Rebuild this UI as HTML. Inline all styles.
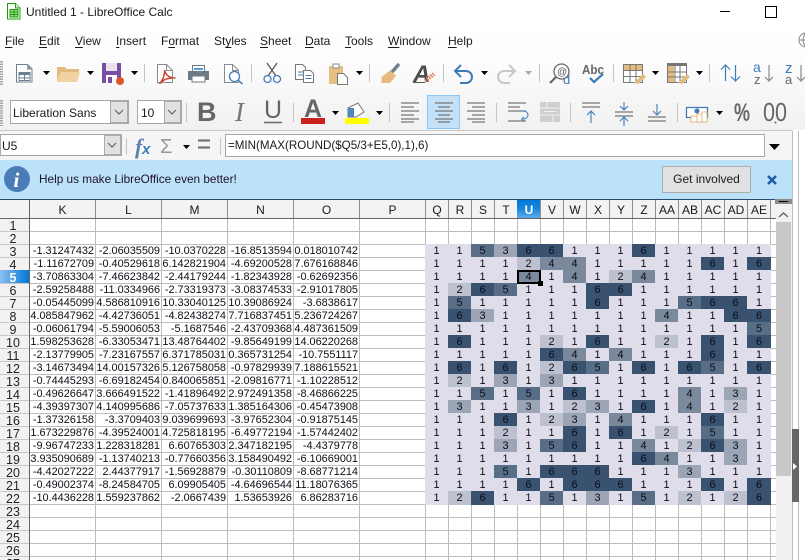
<!DOCTYPE html>
<html><head><meta charset="utf-8"><title>Untitled 1 - LibreOffice Calc</title>
<style>
html,body{margin:0;padding:0;background:#fff}
#p{position:relative;width:805px;height:560px;overflow:hidden;background:#fff;font-family:"Liberation Sans",sans-serif;color:#111}
#p>*{position:absolute}
.t{font-size:12px;white-space:nowrap;line-height:14px;color:#1a1a1a}
.t u{text-decoration:underline;text-underline-offset:2px}
.sep{width:1px;background:#c4c4c4}
.drop{background:#e1e1e1;border:1px solid #ababab;box-sizing:border-box}
.box{background:#fff;border:1px solid #a8a8a8;box-sizing:border-box}
.d{left:29px;top:245px;font-size:10.9px;color:#0e0e16}
.d div{display:flex;height:13px;line-height:13px}
.d b{display:block;width:65px;padding-right:1px;text-align:right;font-weight:normal}
.h{left:425px;top:244px;width:346px;background:#dfdde9;font-size:10.9px;color:#0c0c16}
.h div{display:flex;height:13px}
.h div:last-child{height:14px}
.h i{display:block;width:23px;text-align:center;font-style:normal;line-height:15px}
.h i:last-child{width:24px}
.c2{background:#bdc1cf}.c3{background:#9ba5b5}.c4{background:#7a899c}.c5{background:#586e87}.c6{background:#385270}
.rh{left:0;top:218px;width:26px;text-align:center;font-size:12.5px;color:#222;height:342px;overflow:hidden}
.rh div{height:13px;line-height:17px;overflow:hidden}
.ch{top:200px;height:18px;line-height:20px;text-align:center;font-size:12px;color:#1a1a1a}
</style></head><body>
<div id="p">
<div style="left:0;top:28px;width:805px;height:102px;background:linear-gradient(#fff,#fdfdfd 30%,#f1f1f1)"></div>
<div style="left:0;top:130px;width:792px;height:1px;background:#c8c8c8"></div>
<div style="left:0;top:131px;width:792px;height:29px;background:#f5f5f5"></div>
<div style="left:792px;top:130px;width:13px;height:430px;background:#fff"></div>

<!-- infobar -->
<div style="left:0;top:160px;width:792px;height:39px;background:#bbe2f8"></div>
<div style="left:0;top:199px;width:776px;height:1px;background:#26496e"></div>

<!-- grid -->
<div style="left:30px;top:219px;width:746px;height:341px;background:repeating-linear-gradient(to bottom,transparent 0 12px,#bdbdbd 12px 13px)"></div>
<div style="left:30px;top:219px;width:396px;height:341px;background:repeating-linear-gradient(to right,transparent 0 65px,#bdbdbd 65px 66px)"></div>
<div style="left:426px;top:219px;width:345px;height:341px;background:repeating-linear-gradient(to right,transparent 0 22px,#bdbdbd 22px 23px)"></div>

<!-- headers -->
<div style="left:0;top:200px;width:776px;height:18px;background:#f3f3f3"></div>
<div style="left:0;top:218px;width:29px;height:342px;background:#f2f2f2;"></div>
<div style="left:0;top:219px;width:29px;height:341px;background:repeating-linear-gradient(to bottom,transparent 0 12px,#c8c8c8 12px 13px)"></div>
<div style="left:0;top:218px;width:776px;height:1px;background:#666"></div>
<div style="left:29px;top:200px;width:1px;height:360px;background:#666"></div>
<div style="left:30px;top:200px;width:396px;height:18px;background:repeating-linear-gradient(to right,transparent 0 65px,#8f8f8f 65px 66px)"></div>
<div style="left:426px;top:200px;width:345px;height:18px;background:repeating-linear-gradient(to right,transparent 0 22px,#8f8f8f 22px 23px)"></div>
<div style="left:517px;top:200px;width:23px;height:18px;background:linear-gradient(#0078d7,#1b86dc 50%,#5fabe9)"></div>
<div style="left:0;top:270px;width:29px;height:13px;background:linear-gradient(to right,#8cc0ee,#0078d7)"></div>

<div class="ch" style="left:30px;width:65px">K</div><div class="ch" style="left:96px;width:65px">L</div><div class="ch" style="left:162px;width:65px">M</div><div class="ch" style="left:228px;width:65px">N</div><div class="ch" style="left:294px;width:65px">O</div><div class="ch" style="left:360px;width:65px">P</div>
<div class="ch" style="left:426px;width:22px">Q</div><div class="ch" style="left:449px;width:22px">R</div><div class="ch" style="left:472px;width:22px">S</div><div class="ch" style="left:495px;width:22px">T</div><div class="ch" style="left:518px;width:22px;color:#fff;font-weight:bold">U</div><div class="ch" style="left:541px;width:22px">V</div><div class="ch" style="left:564px;width:22px">W</div><div class="ch" style="left:587px;width:22px">X</div><div class="ch" style="left:610px;width:22px">Y</div><div class="ch" style="left:633px;width:22px">Z</div><div class="ch" style="left:656px;width:22px">AA</div><div class="ch" style="left:679px;width:22px">AB</div><div class="ch" style="left:702px;width:22px">AC</div><div class="ch" style="left:725px;width:22px">AD</div><div class="ch" style="left:748px;width:22px">AE</div>

<div class="rh"><div>1</div><div>2</div><div>3</div><div>4</div><div style="color:#fff;font-weight:bold">5</div><div>6</div><div>7</div><div>8</div><div>9</div><div>10</div><div>11</div><div>12</div><div>13</div><div>14</div><div>15</div><div>16</div><div>17</div><div>18</div><div>19</div><div>20</div><div>21</div><div>22</div><div>23</div><div>24</div><div>25</div><div>26</div><div>27</div></div>

<!-- data -->
<div class="d">
<div><b>-1.31247432</b><b>-2.06035509</b><b>-10.0370228</b><b>-16.8513594</b><b>0.018010742</b></div>
<div><b>-1.11672709</b><b>-0.40529618</b><b>6.142821904</b><b>-4.69200528</b><b>7.676168846</b></div>
<div><b>-3.70863304</b><b>-7.46623842</b><b>-2.44179244</b><b>-1.82343928</b><b>-0.62692356</b></div>
<div><b>-2.59258488</b><b>-11.0334966</b><b>-2.73319373</b><b>-3.08374533</b><b>-2.91017805</b></div>
<div><b>-0.05445099</b><b>4.586810916</b><b>10.33040125</b><b>10.39086924</b><b>-3.6838617</b></div>
<div><b>4.085847962</b><b>-4.42736051</b><b>-4.82438274</b><b>7.716837451</b><b>5.236724267</b></div>
<div><b>-0.06061794</b><b>-5.59006053</b><b>-5.1687546</b><b>-2.43709368</b><b>4.487361509</b></div>
<div><b>1.598253628</b><b>-6.33053471</b><b>13.48764402</b><b>-9.85649199</b><b>14.06220268</b></div>
<div><b>-2.13779905</b><b>-7.23167557</b><b>6.371785031</b><b>0.365731254</b><b>-10.7551117</b></div>
<div><b>-3.14673494</b><b>14.00157326</b><b>5.126758058</b><b>-0.97829939</b><b>7.188615521</b></div>
<div><b>-0.74445293</b><b>-6.69182454</b><b>0.840065851</b><b>-2.09816771</b><b>-1.10228512</b></div>
<div><b>-0.49626647</b><b>3.666491522</b><b>-1.41896492</b><b>2.972491358</b><b>-8.46866225</b></div>
<div><b>-4.39397307</b><b>4.140995686</b><b>-7.05737633</b><b>1.385164306</b><b>-0.45473908</b></div>
<div><b>-1.37326158</b><b>-3.3709403</b><b>9.039699693</b><b>-3.97652304</b><b>-0.91875145</b></div>
<div><b>1.673229876</b><b>-4.39524001</b><b>4.725818195</b><b>-6.49772194</b><b>-1.57442402</b></div>
<div><b>-9.96747233</b><b>1.228318281</b><b>6.60765303</b><b>2.347182195</b><b>-4.4379778</b></div>
<div><b>3.935090689</b><b>-1.13740213</b><b>-0.77660356</b><b>3.158490492</b><b>-6.10669001</b></div>
<div><b>-4.42027222</b><b>2.44377917</b><b>-1.56928879</b><b>-0.30110809</b><b>-8.68771214</b></div>
<div><b>-0.49002374</b><b>-8.24584705</b><b>6.09905405</b><b>-4.64696544</b><b>11.18076365</b></div>
<div><b>-10.4436228</b><b>1.559237862</b><b>-2.0667439</b><b>1.53653926</b><b>6.86283716</b></div>
</div>

<div class="h">
<div><i>1</i><i>1</i><i class="c5">5</i><i class="c3">3</i><i class="c6">6</i><i class="c6">6</i><i>1</i><i>1</i><i>1</i><i class="c6">6</i><i>1</i><i>1</i><i>1</i><i>1</i><i>1</i></div>
<div><i>1</i><i>1</i><i>1</i><i>1</i><i class="c2">2</i><i class="c4">4</i><i class="c4">4</i><i>1</i><i>1</i><i>1</i><i>1</i><i>1</i><i class="c6">6</i><i>1</i><i class="c6">6</i></div>
<div><i>1</i><i>1</i><i>1</i><i>1</i><i class="c4">4</i><i>1</i><i class="c4">4</i><i>1</i><i class="c2">2</i><i class="c4">4</i><i>1</i><i>1</i><i>1</i><i>1</i><i>1</i></div>
<div><i>1</i><i class="c2">2</i><i class="c6">6</i><i class="c5">5</i><i>1</i><i>1</i><i>1</i><i class="c6">6</i><i class="c6">6</i><i>1</i><i>1</i><i>1</i><i>1</i><i>1</i><i>1</i></div>
<div><i>1</i><i class="c5">5</i><i>1</i><i>1</i><i>1</i><i>1</i><i>1</i><i class="c6">6</i><i>1</i><i>1</i><i>1</i><i class="c5">5</i><i class="c6">6</i><i class="c6">6</i><i>1</i></div>
<div><i>1</i><i class="c6">6</i><i class="c3">3</i><i>1</i><i>1</i><i>1</i><i>1</i><i>1</i><i>1</i><i>1</i><i class="c4">4</i><i>1</i><i>1</i><i class="c6">6</i><i class="c6">6</i></div>
<div><i>1</i><i>1</i><i>1</i><i>1</i><i>1</i><i>1</i><i>1</i><i>1</i><i>1</i><i>1</i><i>1</i><i>1</i><i>1</i><i>1</i><i class="c5">5</i></div>
<div><i>1</i><i class="c6">6</i><i>1</i><i>1</i><i>1</i><i class="c2">2</i><i>1</i><i class="c6">6</i><i>1</i><i>1</i><i class="c2">2</i><i>1</i><i class="c6">6</i><i>1</i><i class="c6">6</i></div>
<div><i>1</i><i>1</i><i>1</i><i>1</i><i>1</i><i class="c6">6</i><i class="c4">4</i><i>1</i><i class="c4">4</i><i>1</i><i>1</i><i>1</i><i class="c6">6</i><i>1</i><i>1</i></div>
<div><i>1</i><i class="c6">6</i><i>1</i><i class="c6">6</i><i>1</i><i class="c2">2</i><i class="c6">6</i><i class="c5">5</i><i>1</i><i class="c6">6</i><i>1</i><i class="c6">6</i><i class="c5">5</i><i>1</i><i class="c6">6</i></div>
<div><i>1</i><i class="c2">2</i><i>1</i><i class="c3">3</i><i>1</i><i class="c3">3</i><i>1</i><i>1</i><i>1</i><i>1</i><i>1</i><i>1</i><i>1</i><i>1</i><i>1</i></div>
<div><i>1</i><i>1</i><i class="c5">5</i><i>1</i><i class="c5">5</i><i>1</i><i class="c6">6</i><i>1</i><i>1</i><i>1</i><i>1</i><i class="c4">4</i><i>1</i><i class="c3">3</i><i>1</i></div>
<div><i>1</i><i class="c3">3</i><i>1</i><i>1</i><i class="c3">3</i><i>1</i><i class="c2">2</i><i class="c3">3</i><i>1</i><i class="c6">6</i><i>1</i><i class="c4">4</i><i>1</i><i class="c2">2</i><i>1</i></div>
<div><i>1</i><i>1</i><i>1</i><i class="c6">6</i><i>1</i><i class="c2">2</i><i class="c3">3</i><i>1</i><i class="c4">4</i><i>1</i><i>1</i><i>1</i><i class="c6">6</i><i>1</i><i>1</i></div>
<div><i>1</i><i>1</i><i>1</i><i class="c2">2</i><i>1</i><i>1</i><i class="c6">6</i><i>1</i><i class="c6">6</i><i>1</i><i class="c2">2</i><i>1</i><i class="c5">5</i><i>1</i><i>1</i></div>
<div><i>1</i><i>1</i><i>1</i><i class="c3">3</i><i>1</i><i class="c5">5</i><i class="c6">6</i><i>1</i><i>1</i><i class="c4">4</i><i>1</i><i class="c2">2</i><i class="c6">6</i><i class="c3">3</i><i>1</i></div>
<div><i>1</i><i>1</i><i>1</i><i>1</i><i>1</i><i>1</i><i>1</i><i>1</i><i>1</i><i class="c6">6</i><i class="c4">4</i><i>1</i><i>1</i><i class="c3">3</i><i>1</i></div>
<div><i>1</i><i>1</i><i>1</i><i class="c5">5</i><i>1</i><i class="c6">6</i><i class="c6">6</i><i class="c6">6</i><i>1</i><i>1</i><i>1</i><i class="c3">3</i><i>1</i><i>1</i><i>1</i></div>
<div><i>1</i><i>1</i><i>1</i><i>1</i><i class="c6">6</i><i>1</i><i class="c6">6</i><i class="c6">6</i><i class="c6">6</i><i>1</i><i>1</i><i>1</i><i class="c6">6</i><i>1</i><i class="c6">6</i></div>
<div><i>1</i><i class="c2">2</i><i class="c6">6</i><i>1</i><i>1</i><i class="c5">5</i><i>1</i><i class="c3">3</i><i>1</i><i class="c5">5</i><i>1</i><i class="c2">2</i><i>1</i><i class="c2">2</i><i class="c6">6</i></div>
</div>

<!-- cell cursor -->
<div style="left:517px;top:270px;width:24px;height:14px;border:2px solid #000;box-sizing:border-box"></div>
<div style="left:538px;top:281px;width:5px;height:5px;background:#000"></div>

<!-- scrollbars & sidebar -->
<div style="left:776px;top:200px;width:16px;height:360px;background:#f1f1f1"></div>
<div style="left:775px;top:199px;width:17px;height:5px;background:#8a8a8a"></div>
<div style="left:779px;top:201px;width:9px;height:1px;background:#000"></div>
<div style="left:776px;top:222px;width:15px;height:254px;background:#c8c8c8"></div>
<div style="left:792px;top:131px;width:1px;height:429px;background:#bdbdbd"></div>
<div style="left:798px;top:131px;width:1px;height:429px;background:#bdbdbd"></div>
<div style="left:792px;top:429px;width:7px;height:73px;background:#666"></div>

<!-- title -->
<div class="t" style="left:26px;top:5px;font-size:12px">Untitled 1 - LibreOffice Calc</div>
<div style="left:720px;top:11px;width:10px;height:1px;background:#000"></div>
<div style="left:765px;top:6px;width:10px;height:10px;border:1px solid #000"></div>

<!-- menu -->
<div class="t" style="left:5px;top:34px"><u>F</u>ile</div>
<div class="t" style="left:39px;top:34px"><u>E</u>dit</div>
<div class="t" style="left:75px;top:34px"><u>V</u>iew</div>
<div class="t" style="left:116px;top:34px"><u>I</u>nsert</div>
<div class="t" style="left:161px;top:34px">F<u>o</u>rmat</div>
<div class="t" style="left:214px;top:34px">St<u>y</u>les</div>
<div class="t" style="left:260px;top:34px"><u>S</u>heet</div>
<div class="t" style="left:305px;top:34px"><u>D</u>ata</div>
<div class="t" style="left:345px;top:34px"><u>T</u>ools</div>
<div class="t" style="left:388px;top:34px"><u>W</u>indow</div>
<div class="t" style="left:448px;top:34px"><u>H</u>elp</div>

<!-- toolbar separators -->
<div class="sep" style="left:144px;top:64px;height:18px"></div><div class="sep" style="left:251px;top:64px;height:18px"></div><div class="sep" style="left:369px;top:64px;height:18px"></div><div class="sep" style="left:443px;top:64px;height:18px"></div><div class="sep" style="left:539px;top:64px;height:18px"></div><div class="sep" style="left:613px;top:64px;height:18px"></div><div class="sep" style="left:709px;top:64px;height:18px"></div>
<div class="sep" style="left:186px;top:103px;height:19px"></div><div class="sep" style="left:293px;top:103px;height:19px"></div><div class="sep" style="left:389px;top:103px;height:19px"></div><div class="sep" style="left:496px;top:103px;height:19px"></div><div class="sep" style="left:570px;top:103px;height:19px"></div><div class="sep" style="left:677px;top:103px;height:19px"></div>
<div class="sep" style="left:126px;top:138px;height:17px"></div><div class="sep" style="left:220px;top:138px;height:17px"></div>

<!-- font boxes -->
<div class="box" style="left:10px;top:100px;width:119px;height:24px"></div>
<div class="drop" style="left:110px;top:101px;width:18px;height:22px"></div>
<div class="t" style="left:13px;top:106px">Liberation Sans</div>
<div class="box" style="left:137px;top:100px;width:45px;height:24px"></div>
<div class="drop" style="left:164px;top:101px;width:17px;height:22px"></div>
<div class="t" style="left:141px;top:106px">10</div>
<div style="left:427px;top:95px;width:33px;height:34px;background:#c5e1f7;border:1px solid #8dc6f0;box-sizing:border-box"></div>

<!-- formula bar -->
<div class="box" style="left:0;top:134px;width:122px;height:22px"></div>
<div class="drop" style="left:104px;top:135px;width:17px;height:20px"></div>
<div class="t" style="left:2px;top:139px">U5</div>
<div class="box" style="left:225px;top:134px;width:540px;height:23px"></div>
<div class="t" style="left:228px;top:139px;font-size:11.6px">=MIN(MAX(ROUND($Q5/3+E5,0),1),6)</div>

<!-- infobar contents -->
<div class="t" style="left:39px;top:172px;color:#20102a;font-size:11.8px">Help us make LibreOffice even better!</div>
<div style="left:662px;top:166px;width:89px;height:27px;background:#e1e1e1;border:1px solid #adadad;box-sizing:border-box;text-align:center;line-height:25px;font-size:12px;color:#1a1a1a">Get involved</div>

<!-- icons -->
<svg width="805" height="560" viewBox="0 0 805 560" style="left:0;top:0" font-family="Liberation Sans, sans-serif">
<!-- app icon -->
<path d="M7.500 3.500h8l4.500 4.500v11h-12.500z" fill="#fff" stroke="#18a303"/><path d="M15.500 3.500v4.500h4.500" fill="#dff3da" stroke="#18a303"/><path d="M10 9.500h8v7.500h-8z" fill="#9ed694" stroke="#18a303"/><path d="M10 12h8M10 14.500h8M14 9.500v7.500" stroke="#18a303" fill="none"/>
<!-- globe -->
<circle cx="806" cy="40" r="7" fill="none" stroke="#888"/><path d="M799 40h14M806 33c-4 4-4 10 0 14M806 33c4 4 4 10 0 14" fill="none" stroke="#888"/>
<!-- grippers -->
<path d="M1.500 61v25M1.500 100v26" stroke="#a8a8a8" stroke-width="3" stroke-dasharray="1.500 1"/>

<!-- new -->
<path d="M16.500 64.500h11l4.500 4.500v13h-15.500z" fill="#fff" stroke="#6f7f92"/><path d="M27 64.500l5 5h-5z" fill="#8d99a8"/><path d="M19 72.500h11v8h-11z" fill="#fff" stroke="#6f7f92"/><path d="M19 72.500h11v2.500h-11z" fill="#6f7f92"/><path d="M19 78h11M24.500 75v5" stroke="#6f7f92" fill="none"/>
<path d="M43 71h7l-3.500 4zM87 71h7l-3.500 4zM131 71h7l-3.500 4zM356 71h7l-3.500 4zM481 71h7l-3.500 4zM652 71h7l-3.500 4zM696 71h7l-3.500 4z" fill="#000"/>
<path d="M525 71h7l-3.500 4z" fill="#a9a9a9"/>
<!-- open -->
<path d="M57 82V67h8l2 2h12v5H60l-3 8z" fill="#e3bb7e"/><path d="M57 82l4-10h19l-3 10z" fill="#f1d3a2"/>
<!-- save -->
<path d="M102 63h19v20h-19z" fill="#7a4fa3"/><path d="M106 63h11v8h-11z" fill="#e9e2ef"/><path d="M106 75h11v8h-11z" fill="#fff"/><path d="M108 77h4v6h-4z" fill="#7a4fa3"/><circle cx="120" cy="81" r="4" fill="#d8572b"/>
<!-- pdf -->
<path d="M157.500 64.500h9l6 6v12h-15z" fill="#fff" stroke="#8a8a8a"/><path d="M166.500 64.500v6h6" fill="none" stroke="#8a8a8a"/><path d="M160 83c3-3 5-9 4.500-13 1 4 4 8 11 8-5-.5-11 .5-15 5z" fill="none" stroke="#c8412c" stroke-width="1.500"/>
<!-- print -->
<path d="M192.500 65.500h12v6h-12z" fill="#fff" stroke="#6e7a86"/><path d="M194 68h9v2h-9z" fill="#4f9ad4"/><path d="M188 71h21v9h-21z" fill="#6e7a86"/><path d="M192 76h13v6h-13z" fill="#fff" stroke="#6e7a86"/>
<!-- preview -->
<path d="M224.500 64.500h8l6 6v12h-14z" fill="#fff" stroke="#8a8a8a"/><path d="M232.500 64.500v6h6" fill="none" stroke="#8a8a8a"/><circle cx="234.500" cy="76.500" r="5" fill="#fff" stroke="#3f7ab8" stroke-width="1.300"/><path d="M238 80l4.500 4" stroke="#3f7ab8" stroke-width="1.500"/>
<!-- cut -->
<path d="M268 76L277 63M276 76L267 63" stroke="#666" stroke-width="1.500" fill="none"/><circle cx="267.500" cy="79" r="3.500" fill="none" stroke="#3f7ab8" stroke-width="1.300"/><circle cx="277" cy="79" r="3.500" fill="none" stroke="#3f7ab8" stroke-width="1.300"/>
<!-- copy -->
<path d="M295.500 64.500h7l3 3v12h-10z" fill="#fff" stroke="#777"/><path d="M303.500 70.500h7l3 3v9h-10z" fill="#fff" stroke="#777"/><path d="M298 72h5M298 75h5M305.500 75.500h6M305.500 78.500h6" stroke="#3f7ab8" fill="none"/>
<!-- paste -->
<path d="M329 66h14v18h-14z" fill="#e6c083"/><path d="M333 64h6v4h-6z" fill="#fff" stroke="#888"/><path d="M337.500 73.500h6l4 4v7h-10z" fill="#fff" stroke="#777"/>
<!-- clone brush -->
<path d="M381.500 77l9-7 5.500 6-6 7h-8.500z" fill="#e3bb7e"/><path d="M392 72l7-8" stroke="#6f7f92" stroke-width="3.500"/>
<!-- char format -->
<text x="413" y="82" font-size="24" font-weight="bold" font-style="italic" fill="#4d4d4d">A</text><path d="M425 81l9-7" stroke="#e08a66" stroke-width="4" stroke-dasharray="1.500 1"/><path d="M413 82.500h12" stroke="#555"/>
<!-- undo -->
<path d="M455 71h11a6 6 0 0 1 0 12h-6M461 65l-6 6 6 6" fill="none" stroke="#3f7ab8" stroke-width="2"/>
<!-- redo -->
<path d="M515 71h-11a6 6 0 0 0 0 12h6M509 65l6 6-6 6" fill="none" stroke="#c8c8c8" stroke-width="2"/>
<!-- find -->
<circle cx="561.500" cy="71.500" r="7.500" fill="#fff" stroke="#666" stroke-width="1.300"/><path d="M556 77l-6 6" stroke="#666" stroke-width="2.200"/><text x="557" y="75" font-size="10" fill="#555">@</text><text x="563" y="84" font-size="13" fill="#3f7ab8">d</text>
<!-- spell -->
<text x="582" y="74" font-size="13" font-weight="bold" fill="#666" textLength="22" lengthAdjust="spacingAndGlyphs">Abc</text><path d="M590 78l4 4 9-8" fill="none" stroke="#3f7ab8" stroke-width="2.200"/>
<!-- define table -->
<path d="M623.500 64.500h19v18h-19z" fill="#fff" stroke="#777"/><path d="M624 65h18v5h-18z" fill="#e3bb7e"/><path d="M624 70.500h18M624 76.500h18M630 65v18M636 65v18" stroke="#777" fill="none"/><path d="M634 83l9-9 3 3-8 7z" fill="#e3bb7e"/>
<path d="M667.500 63.500h19v19h-19z" fill="#fff" stroke="#777"/><path d="M667 63h20v3h-20z" fill="#777"/><path d="M668 66h6v16h-6z" fill="#e3bb7e"/><path d="M668 72h18M668 77h18M675 66v16M680 66v16" stroke="#777" fill="none"/><path d="M678 83l9-9 3 3-8 7z" fill="#e3bb7e"/>
<!-- sorts -->
<path d="M725.500 81V65M721 69.500l4.500-4.500 4.500 4.500M735.500 65v16M731 76.500l4.500 4.500 4.500-4.500" fill="none" stroke="#3f7ab8" stroke-width="1.200"/>
<text x="753" y="72" font-size="14" fill="#3f7ab8">a</text><text x="754" y="84" font-size="13" fill="#666">z</text><path d="M769 65v16M765 77l4 4 4-4" fill="none" stroke="#888" stroke-width="1.200"/>
<text x="785" y="73" font-size="15" fill="#3f7ab8">z</text><text x="785" y="84" font-size="13" fill="#666">a</text><path d="M801 65v16M797 77l4 4 4-4" fill="none" stroke="#888" stroke-width="1.200"/>

<!-- combo chevrons -->
<path d="M115 110l4 4 4-4M168 110l4 4 4-4M108 143l4 4 4-4" fill="none" stroke="#666" stroke-width="1.200"/>

<!-- B I U -->
<text x="197" y="121" font-size="27" font-weight="bold" fill="#666">B</text>
<text x="235" y="121" font-size="27" font-style="italic" font-family="Liberation Serif, serif" fill="#777">I</text>
<text x="264" y="118" font-size="25" fill="#666">U</text><path d="M264 122.500h18" stroke="#666" stroke-width="1.500"/>
<!-- font color -->
<text x="304" y="117" font-size="25" font-weight="bold" fill="#666" textLength="18" lengthAdjust="spacingAndGlyphs">A</text><path d="M301 118h24v6h-24z" fill="#c9211e"/><path d="M332 111h7l-3.500 4zM376 111h7l-3.500 4zM716 111h7l-3.500 4zM183 145h7l-3.500 4z" fill="#000"/>
<!-- highlight -->
<path d="M348 108l10-5 6 9-8 5h-8z" fill="#fff" stroke="#777"/><path d="M348 108h6v9h-6z" fill="#4f86c0"/><path d="M345 118h24v6h-24z" fill="#ffff00"/>
<!-- align left/center/right -->
<g stroke="#777" stroke-width="1.200" fill="none">
<path d="M401 103h18M401 107h13M401 111h18M401 115h13M401 119h18M401 122h13"/>
<path d="M435 103h18M438 107h12M435 111h18M438 115h12M435 119h18M438 122h12"/>
<path d="M467 103h18M472 107h13M467 111h18M472 115h13M467 119h18M472 122h13"/>
<path d="M508 103h18M508 107h12M508 111h18M508 121h18"/>
<path d="M582 103h18M582 107h18M615 112h18M615 116h18M648 117h18M648 121h18"/>
</g>
<path d="M520 111h4a3 3 0 0 1 0 8h-1M524 117l-2.500 2 2.500 2" fill="none" stroke="#3f7ab8"/>
<!-- merge -->
<path d="M540 102h20v20h-20z" fill="#cfcfcf"/><path d="M540 108h20M540 115h20M547 102v6M553 115v7M544 111.500h12" stroke="#f2f2f2" fill="none"/>
<!-- v-align arrows -->
<path d="M591 123v-12M587 115l4-4 4 4M624 102v8M620 106l4 4 4-4M624 126v-9M620 121l4-4 4 4M657 104v11M653 111l4 4 4-4" fill="none" stroke="#3f7ab8" stroke-width="1.100"/>
<!-- currency -->
<path d="M686.500 107.500h21v10h-21z" fill="#fff" stroke="#3f7ab8" stroke-width="1.300"/><circle cx="697" cy="111" r="2.500" fill="#3f7ab8"/><path d="M691 116h6v6h-6zM697 114h5v8h-5zM702 112h5v10h-5z" fill="#fff" stroke="#e3bb7e"/>
<!-- percent, number -->
<text x="734" y="121" font-size="25" font-weight="bold" fill="#666" textLength="16" lengthAdjust="spacingAndGlyphs">%</text>
<text x="763" y="121" font-size="26" fill="#666" textLength="24" lengthAdjust="spacingAndGlyphs">00</text><circle cx="775.500" cy="122.500" r="1" fill="#666"/>

<!-- formula bar icons -->
<text x="135" y="154" font-size="22" font-style="italic" font-weight="bold" font-family="Liberation Serif, serif" fill="#5b84ad">f</text><text x="142" y="154" font-size="15" font-style="italic" font-weight="bold" fill="#3f7ab8">x</text>
<text x="160" y="153" font-size="20" fill="#999">Σ</text>
<path d="M198 140.500h12M198 147.500h12" stroke="#777" stroke-width="2.200"/>
<path d="M769 144h11l-5.500 6z" fill="#000"/>

<!-- info -->
<circle cx="17" cy="179" r="13" fill="#4a7cb8"/><text x="13.500" y="187" font-size="21" font-weight="bold" font-style="italic" font-family="Liberation Serif, serif" fill="#fff">i</text>
<path d="M768 176l8 8M776 176l-8 8" stroke="#1c5ea5" stroke-width="2.500"/>

<!-- scroll arrows -->
<path d="M779 217l4.500-4 4.500 4" fill="none" stroke="#666" stroke-width="1.500"/>
<path d="M793 463v7l4-3.500z" fill="#fff"/>
</svg>
</div>
</body></html>
